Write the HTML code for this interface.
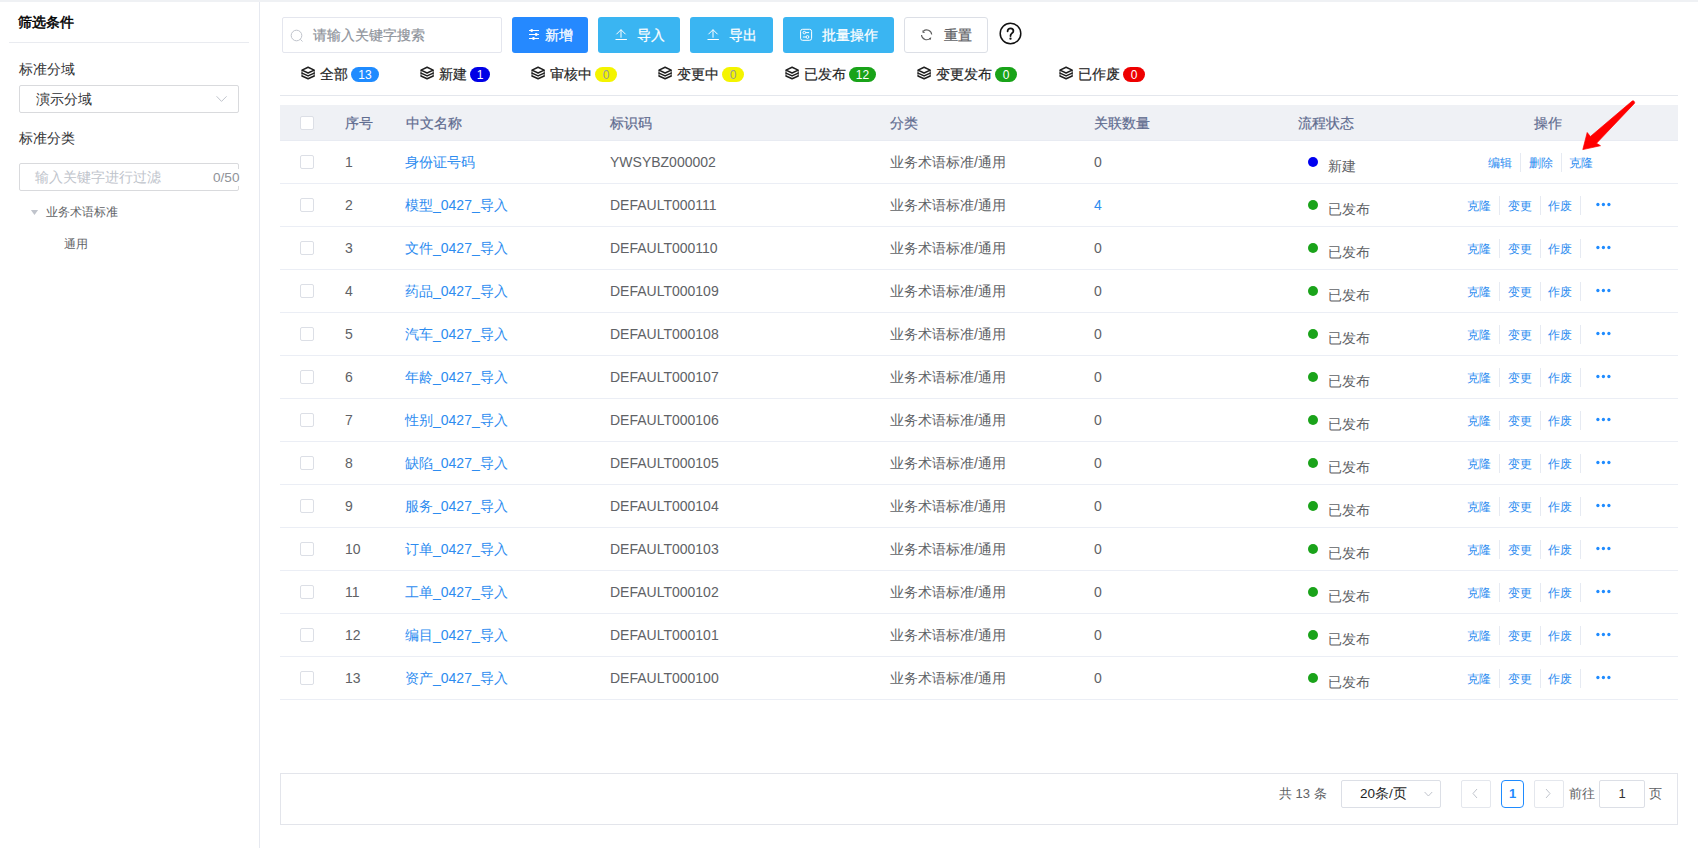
<!DOCTYPE html><html><head><meta charset="utf-8"><style>html,body{margin:0;padding:0}
body{width:1698px;height:848px;overflow:hidden;background:#fff;position:relative;font-family:"Liberation Sans",sans-serif}
.abs,.t,.hl,.vl,.box,.btn,.badge,.cb,.dot,.stk{position:absolute}
.t{white-space:nowrap}
.topstrip{position:absolute;left:0;top:0;width:1698px;height:2px;background:#eff1f4}
.sbborder{position:absolute;left:259px;top:2px;width:1px;height:846px;background:#e6e9f0}
.hl{height:1px}
.vl{width:1px;height:19px;background:#e6eaf2}
.box{border:1px solid #dcdfe6;border-radius:2px;background:#fff}
.btn{top:17px;height:36px;border-radius:3px}
.btn.pri{background:#2589ff}
.btn.lb{background:#3ab5f2}
.btn.plain{background:#fff;border:1px solid #dcdfe6;box-sizing:border-box}
.badge{top:67px;height:15px;border-radius:8px;font-size:12px;line-height:17px;text-align:center}
.cb{width:12px;height:12px;border:1px solid #dcdfe6;border-radius:2px;background:#fff}
.th{font-size:14px;font-weight:normal;-webkit-text-stroke:0.2px #5f6c90;color:#5f6c90;line-height:18px}
.td{font-size:14px;color:#606266;line-height:18px}
.lk{color:#2d8cf0}
.op{font-size:12px;color:#2d8cf0;line-height:16px}
.dot{width:10px;height:10px;border-radius:50%}
</style></head><body>
<div class="topstrip"></div><div class="sbborder"></div>
<div class="t" style="left:18px;top:13px;font-size:14px;-webkit-text-stroke:0.5px #000;color:#000;line-height:18px">筛选条件</div>
<div class="hl" style="left:9px;top:42px;width:240px;background:#e9ebf0"></div>
<div class="t" style="left:19px;top:60px;font-size:14px;color:#303133;line-height:18px">标准分域</div>
<div class="box" style="left:19px;top:85px;width:218px;height:26px;border-color:#d9dadd"></div>
<div class="t" style="left:36px;top:90px;font-size:14px;color:#303133;line-height:18px">演示分域</div>
<svg class="abs" style="left:215px;top:95px" width="12" height="8" viewBox="0 0 12 8"><path d="M1.6 1.3 L6.5 6.4 L11.6 1.3" fill="none" stroke="#c0c4cc" stroke-width="1"/></svg>
<div class="t" style="left:19px;top:129px;font-size:14px;color:#303133;line-height:18px">标准分类</div>
<div class="box" style="left:19px;top:163px;width:218px;height:26px;border-color:#d9dadd"></div>
<div class="t" style="left:35px;top:168px;font-size:14px;color:#c0c4cc;line-height:18px">输入关键字进行过滤</div>
<div class="t" style="left:213px;top:169px;font-size:13.6px;color:#909399;line-height:17px;background:#fff;padding-right:2px">0/50</div>
<svg class="abs" style="left:30px;top:209px" width="9" height="7" viewBox="0 0 9 7"><path d="M0.9 1 L8.1 1 L4.5 6 Z" fill="#c0c4cc"/></svg>
<div class="t" style="left:46px;top:204px;font-size:12px;color:#606266;line-height:16px">业务术语标准</div>
<div class="t" style="left:64px;top:236px;font-size:12px;color:#606266;line-height:16px">通用</div>
<div class="box" style="left:282px;top:17px;width:218px;height:34px;border-color:#e4e6ee"></div>
<svg class="abs" style="left:290px;top:28.5px" width="14" height="14" viewBox="0 0 14 14"><circle cx="6.5" cy="6.5" r="5.3" fill="none" stroke="#c0c4cc" stroke-width="1"/><path d="M10.3 10.3 L12.5 12.5" stroke="#c0c4cc" stroke-width="1"/></svg>
<div class="t" style="left:313px;top:26px;font-size:14px;color:#8e939b;-webkit-text-stroke:0.2px #8e939b;line-height:18px">请输入关键字搜索</div>
<div class="btn pri" style="left:512px;width:76px"></div><svg class="abs" style="left:528px;top:28px" width="12" height="12" viewBox="0 0 12 12"><g stroke="#fff" stroke-width="1"><path d="M1 2.5 H11 M1 6.5 H11 M1 10.5 H11"/></g><g fill="#fff"><circle cx="3.7" cy="2.5" r="1.4"/><circle cx="8.2" cy="6.5" r="1.4"/><circle cx="5.5" cy="10.5" r="1.4"/></g></svg><div class="t" style="left:545px;top:26px;font-size:14px;line-height:18px;color:#fff;-webkit-text-stroke:0.25px #fff">新增</div>
<div class="btn lb" style="left:598px;width:82px"></div><svg class="abs" style="left:615px;top:27px" width="12" height="14" viewBox="0 0 12 14"><g stroke="#fff" stroke-width="1" fill="none" stroke-linecap="round"><path d="M0.9 12.5 H11.5"/><path d="M6 3 V10.3"/><path d="M1.7 7 L6 2.7 L10.3 7"/></g></svg><div class="t" style="left:637px;top:26px;font-size:14px;line-height:18px;color:#fff;-webkit-text-stroke:0.25px #fff">导入</div>
<div class="btn lb" style="left:690px;width:83px"></div><svg class="abs" style="left:707px;top:27px" width="12" height="14" viewBox="0 0 12 14"><g stroke="#fff" stroke-width="1" fill="none" stroke-linecap="round"><path d="M0.9 12.5 H11.5"/><path d="M6 3 V10.3"/><path d="M1.7 7 L6 2.7 L10.3 7"/></g></svg><div class="t" style="left:729px;top:26px;font-size:14px;line-height:18px;color:#fff;-webkit-text-stroke:0.25px #fff">导出</div>
<div class="btn lb" style="left:783px;width:111px"></div><svg class="abs" style="left:799px;top:28px" width="14" height="14" viewBox="0 0 14 14"><g stroke="#fff" stroke-width="1" fill="none"><rect x="1.6" y="1.3" width="11" height="11" rx="2"/><path d="M6.6 4.6 H10.1 M3.9 9 H7.1"/><circle cx="5.3" cy="4.6" r="1.3"/><circle cx="8.5" cy="9" r="1.4"/></g></svg><div class="t" style="left:822px;top:26px;font-size:14px;line-height:18px;color:#fff;-webkit-text-stroke:0.25px #fff">批量操作</div>
<div class="btn plain" style="left:904px;width:84px"></div><svg class="abs" style="left:920px;top:28px" width="14" height="14" viewBox="0 0 14 14"><g stroke="#5c5c5c" stroke-width="1.1" fill="none"><path d="M3.3 3.2 A5.1 5.1 0 0 1 11.7 6.5"/><path d="M1.5 7 A5.1 5.1 0 0 0 10.4 10"/></g><g fill="#5c5c5c"><path d="M2.3 2.2 L2.7 5 L5.2 4.4 Z"/><path d="M11.2 9 L10.9 11.7 L8.5 11.2 Z"/></g></svg><div class="t" style="left:944px;top:26px;font-size:14px;line-height:18px;color:#606266;-webkit-text-stroke:0.25px #606266">重置</div>
<svg class="abs" style="left:998px;top:22px" width="24" height="24" viewBox="0 0 24 24"><circle cx="12.5" cy="11.5" r="10.3" fill="none" stroke="#111" stroke-width="1.5"/><path d="M9.6 9.3 C9.6 7.4 10.9 6.4 12.5 6.4 C14.1 6.4 15.4 7.5 15.4 9 C15.4 10.3 14.6 10.9 13.6 11.6 C12.8 12.2 12.5 12.7 12.5 14" fill="none" stroke="#111" stroke-width="1.8" stroke-linecap="round"/><circle cx="12.5" cy="16.7" r="1.15" fill="#111"/></svg>
<svg class="stk" style="left:301px;top:66px" width="15" height="14" viewBox="0 0 15 14"><g fill="none" stroke="#1e1e1e" stroke-width="1.5" stroke-linejoin="round" stroke-linecap="round"><path d="M7.1 1.2 L13.2 4.1 L7.1 7.0 L1.0 4.1 Z"/><path d="M1.0 7.1 L7.1 9.9 L13.2 7.1"/><path d="M1.0 10.0 L7.1 12.8 L13.2 10.0"/></g><g stroke="#1e1e1e" stroke-width="0.8"><path d="M1 4.1 V10 M13.2 4.1 V10"/></g></svg>
<div class="t" style="left:320px;top:65px;font-size:14px;color:#262626;-webkit-text-stroke:0.2px #262626;line-height:18px">全部</div>
<div class="badge" style="left:351px;width:28px;background:#1f8bff;color:#fff">13</div>
<svg class="stk" style="left:420px;top:66px" width="15" height="14" viewBox="0 0 15 14"><g fill="none" stroke="#1e1e1e" stroke-width="1.5" stroke-linejoin="round" stroke-linecap="round"><path d="M7.1 1.2 L13.2 4.1 L7.1 7.0 L1.0 4.1 Z"/><path d="M1.0 7.1 L7.1 9.9 L13.2 7.1"/><path d="M1.0 10.0 L7.1 12.8 L13.2 10.0"/></g><g stroke="#1e1e1e" stroke-width="0.8"><path d="M1 4.1 V10 M13.2 4.1 V10"/></g></svg>
<div class="t" style="left:439px;top:65px;font-size:14px;color:#262626;-webkit-text-stroke:0.2px #262626;line-height:18px">新建</div>
<div class="badge" style="left:470px;width:20px;background:#0000e6;color:#fff">1</div>
<svg class="stk" style="left:531px;top:66px" width="15" height="14" viewBox="0 0 15 14"><g fill="none" stroke="#1e1e1e" stroke-width="1.5" stroke-linejoin="round" stroke-linecap="round"><path d="M7.1 1.2 L13.2 4.1 L7.1 7.0 L1.0 4.1 Z"/><path d="M1.0 7.1 L7.1 9.9 L13.2 7.1"/><path d="M1.0 10.0 L7.1 12.8 L13.2 10.0"/></g><g stroke="#1e1e1e" stroke-width="0.8"><path d="M1 4.1 V10 M13.2 4.1 V10"/></g></svg>
<div class="t" style="left:550px;top:65px;font-size:14px;color:#262626;-webkit-text-stroke:0.2px #262626;line-height:18px">审核中</div>
<div class="badge" style="left:595px;width:22px;background:#f4f400;color:#9a9a9a">0</div>
<svg class="stk" style="left:658px;top:66px" width="15" height="14" viewBox="0 0 15 14"><g fill="none" stroke="#1e1e1e" stroke-width="1.5" stroke-linejoin="round" stroke-linecap="round"><path d="M7.1 1.2 L13.2 4.1 L7.1 7.0 L1.0 4.1 Z"/><path d="M1.0 7.1 L7.1 9.9 L13.2 7.1"/><path d="M1.0 10.0 L7.1 12.8 L13.2 10.0"/></g><g stroke="#1e1e1e" stroke-width="0.8"><path d="M1 4.1 V10 M13.2 4.1 V10"/></g></svg>
<div class="t" style="left:677px;top:65px;font-size:14px;color:#262626;-webkit-text-stroke:0.2px #262626;line-height:18px">变更中</div>
<div class="badge" style="left:722px;width:22px;background:#f4f400;color:#9a9a9a">0</div>
<svg class="stk" style="left:785px;top:66px" width="15" height="14" viewBox="0 0 15 14"><g fill="none" stroke="#1e1e1e" stroke-width="1.5" stroke-linejoin="round" stroke-linecap="round"><path d="M7.1 1.2 L13.2 4.1 L7.1 7.0 L1.0 4.1 Z"/><path d="M1.0 7.1 L7.1 9.9 L13.2 7.1"/><path d="M1.0 10.0 L7.1 12.8 L13.2 10.0"/></g><g stroke="#1e1e1e" stroke-width="0.8"><path d="M1 4.1 V10 M13.2 4.1 V10"/></g></svg>
<div class="t" style="left:804px;top:65px;font-size:14px;color:#262626;-webkit-text-stroke:0.2px #262626;line-height:18px">已发布</div>
<div class="badge" style="left:849px;width:27px;background:#19a319;color:#fff">12</div>
<svg class="stk" style="left:917px;top:66px" width="15" height="14" viewBox="0 0 15 14"><g fill="none" stroke="#1e1e1e" stroke-width="1.5" stroke-linejoin="round" stroke-linecap="round"><path d="M7.1 1.2 L13.2 4.1 L7.1 7.0 L1.0 4.1 Z"/><path d="M1.0 7.1 L7.1 9.9 L13.2 7.1"/><path d="M1.0 10.0 L7.1 12.8 L13.2 10.0"/></g><g stroke="#1e1e1e" stroke-width="0.8"><path d="M1 4.1 V10 M13.2 4.1 V10"/></g></svg>
<div class="t" style="left:936px;top:65px;font-size:14px;color:#262626;-webkit-text-stroke:0.2px #262626;line-height:18px">变更发布</div>
<div class="badge" style="left:995px;width:22px;background:#19a319;color:#fff">0</div>
<svg class="stk" style="left:1059px;top:66px" width="15" height="14" viewBox="0 0 15 14"><g fill="none" stroke="#1e1e1e" stroke-width="1.5" stroke-linejoin="round" stroke-linecap="round"><path d="M7.1 1.2 L13.2 4.1 L7.1 7.0 L1.0 4.1 Z"/><path d="M1.0 7.1 L7.1 9.9 L13.2 7.1"/><path d="M1.0 10.0 L7.1 12.8 L13.2 10.0"/></g><g stroke="#1e1e1e" stroke-width="0.8"><path d="M1 4.1 V10 M13.2 4.1 V10"/></g></svg>
<div class="t" style="left:1078px;top:65px;font-size:14px;color:#262626;-webkit-text-stroke:0.2px #262626;line-height:18px">已作废</div>
<div class="badge" style="left:1123px;width:22px;background:#ee0000;color:#fff">0</div>
<div class="hl" style="left:280px;top:95px;width:1398px;background:#e4e7ed"></div>
<div class="abs" style="left:280px;top:105px;width:1398px;height:35px;background:#eff1f5"></div>
<div class="hl" style="left:280px;top:140px;width:1398px;background:#e8ebf2"></div>
<div class="cb" style="left:300px;top:116px"></div>
<div class="t th" style="left:345px;top:114px">序号</div>
<div class="t th" style="left:406px;top:114px">中文名称</div>
<div class="t th" style="left:610px;top:114px">标识码</div>
<div class="t th" style="left:890px;top:114px">分类</div>
<div class="t th" style="left:1094px;top:114px">关联数量</div>
<div class="t th" style="left:1298px;top:114px">流程状态</div>
<div class="t th" style="left:1534px;top:114px">操作</div>
<div class="hl" style="left:280px;top:183px;width:1398px;background:#ebeef5"></div>
<div class="cb" style="left:300px;top:155px"></div>
<div class="t td" style="left:345px;top:153px">1</div>
<div class="t td lk" style="left:405px;top:153px">身份证号码</div>
<div class="t td" style="left:610px;top:153px">YWSYBZ000002</div>
<div class="t td" style="left:890px;top:153px">业务术语标准/通用</div>
<div class="t td" style="left:1094px;top:153px">0</div>
<div class="dot" style="left:1308px;top:157px;background:#0000f0"></div>
<div class="t td" style="left:1328px;top:157px">新建</div>
<div class="t op" style="left:1488px;top:155px">编辑</div>
<div class="t op" style="left:1529px;top:155px">删除</div>
<div class="t op" style="left:1569px;top:155px">克隆</div>
<div class="vl" style="left:1520px;top:153px"></div>
<div class="vl" style="left:1561px;top:153px"></div>
<div class="hl" style="left:280px;top:226px;width:1398px;background:#ebeef5"></div>
<div class="cb" style="left:300px;top:198px"></div>
<div class="t td" style="left:345px;top:196px">2</div>
<div class="t td lk" style="left:405px;top:196px">模型_0427_导入</div>
<div class="t td" style="left:610px;top:196px">DEFAULT000111</div>
<div class="t td" style="left:890px;top:196px">业务术语标准/通用</div>
<div class="t td lk" style="left:1094px;top:196px">4</div>
<div class="dot" style="left:1308px;top:200px;background:#1aa31a"></div>
<div class="t td" style="left:1328px;top:200px">已发布</div>
<div class="t op" style="left:1467px;top:198px">克隆</div>
<div class="t op" style="left:1508px;top:198px">变更</div>
<div class="t op" style="left:1548px;top:198px">作废</div>
<div class="vl" style="left:1499px;top:196px"></div>
<div class="vl" style="left:1540px;top:196px"></div>
<div class="vl" style="left:1580px;top:196px"></div>
<svg class="abs" style="left:1595px;top:202px" width="16" height="5" viewBox="0 0 16 5"><circle cx="2.9" cy="2.5" r="1.65" fill="#1f8bff"/><circle cx="8.4" cy="2.5" r="1.65" fill="#1f8bff"/><circle cx="13.9" cy="2.5" r="1.65" fill="#1f8bff"/></svg>
<div class="hl" style="left:280px;top:269px;width:1398px;background:#ebeef5"></div>
<div class="cb" style="left:300px;top:241px"></div>
<div class="t td" style="left:345px;top:239px">3</div>
<div class="t td lk" style="left:405px;top:239px">文件_0427_导入</div>
<div class="t td" style="left:610px;top:239px">DEFAULT000110</div>
<div class="t td" style="left:890px;top:239px">业务术语标准/通用</div>
<div class="t td" style="left:1094px;top:239px">0</div>
<div class="dot" style="left:1308px;top:243px;background:#1aa31a"></div>
<div class="t td" style="left:1328px;top:243px">已发布</div>
<div class="t op" style="left:1467px;top:241px">克隆</div>
<div class="t op" style="left:1508px;top:241px">变更</div>
<div class="t op" style="left:1548px;top:241px">作废</div>
<div class="vl" style="left:1499px;top:239px"></div>
<div class="vl" style="left:1540px;top:239px"></div>
<div class="vl" style="left:1580px;top:239px"></div>
<svg class="abs" style="left:1595px;top:245px" width="16" height="5" viewBox="0 0 16 5"><circle cx="2.9" cy="2.5" r="1.65" fill="#1f8bff"/><circle cx="8.4" cy="2.5" r="1.65" fill="#1f8bff"/><circle cx="13.9" cy="2.5" r="1.65" fill="#1f8bff"/></svg>
<div class="hl" style="left:280px;top:312px;width:1398px;background:#ebeef5"></div>
<div class="cb" style="left:300px;top:284px"></div>
<div class="t td" style="left:345px;top:282px">4</div>
<div class="t td lk" style="left:405px;top:282px">药品_0427_导入</div>
<div class="t td" style="left:610px;top:282px">DEFAULT000109</div>
<div class="t td" style="left:890px;top:282px">业务术语标准/通用</div>
<div class="t td" style="left:1094px;top:282px">0</div>
<div class="dot" style="left:1308px;top:286px;background:#1aa31a"></div>
<div class="t td" style="left:1328px;top:286px">已发布</div>
<div class="t op" style="left:1467px;top:284px">克隆</div>
<div class="t op" style="left:1508px;top:284px">变更</div>
<div class="t op" style="left:1548px;top:284px">作废</div>
<div class="vl" style="left:1499px;top:282px"></div>
<div class="vl" style="left:1540px;top:282px"></div>
<div class="vl" style="left:1580px;top:282px"></div>
<svg class="abs" style="left:1595px;top:288px" width="16" height="5" viewBox="0 0 16 5"><circle cx="2.9" cy="2.5" r="1.65" fill="#1f8bff"/><circle cx="8.4" cy="2.5" r="1.65" fill="#1f8bff"/><circle cx="13.9" cy="2.5" r="1.65" fill="#1f8bff"/></svg>
<div class="hl" style="left:280px;top:355px;width:1398px;background:#ebeef5"></div>
<div class="cb" style="left:300px;top:327px"></div>
<div class="t td" style="left:345px;top:325px">5</div>
<div class="t td lk" style="left:405px;top:325px">汽车_0427_导入</div>
<div class="t td" style="left:610px;top:325px">DEFAULT000108</div>
<div class="t td" style="left:890px;top:325px">业务术语标准/通用</div>
<div class="t td" style="left:1094px;top:325px">0</div>
<div class="dot" style="left:1308px;top:329px;background:#1aa31a"></div>
<div class="t td" style="left:1328px;top:329px">已发布</div>
<div class="t op" style="left:1467px;top:327px">克隆</div>
<div class="t op" style="left:1508px;top:327px">变更</div>
<div class="t op" style="left:1548px;top:327px">作废</div>
<div class="vl" style="left:1499px;top:325px"></div>
<div class="vl" style="left:1540px;top:325px"></div>
<div class="vl" style="left:1580px;top:325px"></div>
<svg class="abs" style="left:1595px;top:331px" width="16" height="5" viewBox="0 0 16 5"><circle cx="2.9" cy="2.5" r="1.65" fill="#1f8bff"/><circle cx="8.4" cy="2.5" r="1.65" fill="#1f8bff"/><circle cx="13.9" cy="2.5" r="1.65" fill="#1f8bff"/></svg>
<div class="hl" style="left:280px;top:398px;width:1398px;background:#ebeef5"></div>
<div class="cb" style="left:300px;top:370px"></div>
<div class="t td" style="left:345px;top:368px">6</div>
<div class="t td lk" style="left:405px;top:368px">年龄_0427_导入</div>
<div class="t td" style="left:610px;top:368px">DEFAULT000107</div>
<div class="t td" style="left:890px;top:368px">业务术语标准/通用</div>
<div class="t td" style="left:1094px;top:368px">0</div>
<div class="dot" style="left:1308px;top:372px;background:#1aa31a"></div>
<div class="t td" style="left:1328px;top:372px">已发布</div>
<div class="t op" style="left:1467px;top:370px">克隆</div>
<div class="t op" style="left:1508px;top:370px">变更</div>
<div class="t op" style="left:1548px;top:370px">作废</div>
<div class="vl" style="left:1499px;top:368px"></div>
<div class="vl" style="left:1540px;top:368px"></div>
<div class="vl" style="left:1580px;top:368px"></div>
<svg class="abs" style="left:1595px;top:374px" width="16" height="5" viewBox="0 0 16 5"><circle cx="2.9" cy="2.5" r="1.65" fill="#1f8bff"/><circle cx="8.4" cy="2.5" r="1.65" fill="#1f8bff"/><circle cx="13.9" cy="2.5" r="1.65" fill="#1f8bff"/></svg>
<div class="hl" style="left:280px;top:441px;width:1398px;background:#ebeef5"></div>
<div class="cb" style="left:300px;top:413px"></div>
<div class="t td" style="left:345px;top:411px">7</div>
<div class="t td lk" style="left:405px;top:411px">性别_0427_导入</div>
<div class="t td" style="left:610px;top:411px">DEFAULT000106</div>
<div class="t td" style="left:890px;top:411px">业务术语标准/通用</div>
<div class="t td" style="left:1094px;top:411px">0</div>
<div class="dot" style="left:1308px;top:415px;background:#1aa31a"></div>
<div class="t td" style="left:1328px;top:415px">已发布</div>
<div class="t op" style="left:1467px;top:413px">克隆</div>
<div class="t op" style="left:1508px;top:413px">变更</div>
<div class="t op" style="left:1548px;top:413px">作废</div>
<div class="vl" style="left:1499px;top:411px"></div>
<div class="vl" style="left:1540px;top:411px"></div>
<div class="vl" style="left:1580px;top:411px"></div>
<svg class="abs" style="left:1595px;top:417px" width="16" height="5" viewBox="0 0 16 5"><circle cx="2.9" cy="2.5" r="1.65" fill="#1f8bff"/><circle cx="8.4" cy="2.5" r="1.65" fill="#1f8bff"/><circle cx="13.9" cy="2.5" r="1.65" fill="#1f8bff"/></svg>
<div class="hl" style="left:280px;top:484px;width:1398px;background:#ebeef5"></div>
<div class="cb" style="left:300px;top:456px"></div>
<div class="t td" style="left:345px;top:454px">8</div>
<div class="t td lk" style="left:405px;top:454px">缺陷_0427_导入</div>
<div class="t td" style="left:610px;top:454px">DEFAULT000105</div>
<div class="t td" style="left:890px;top:454px">业务术语标准/通用</div>
<div class="t td" style="left:1094px;top:454px">0</div>
<div class="dot" style="left:1308px;top:458px;background:#1aa31a"></div>
<div class="t td" style="left:1328px;top:458px">已发布</div>
<div class="t op" style="left:1467px;top:456px">克隆</div>
<div class="t op" style="left:1508px;top:456px">变更</div>
<div class="t op" style="left:1548px;top:456px">作废</div>
<div class="vl" style="left:1499px;top:454px"></div>
<div class="vl" style="left:1540px;top:454px"></div>
<div class="vl" style="left:1580px;top:454px"></div>
<svg class="abs" style="left:1595px;top:460px" width="16" height="5" viewBox="0 0 16 5"><circle cx="2.9" cy="2.5" r="1.65" fill="#1f8bff"/><circle cx="8.4" cy="2.5" r="1.65" fill="#1f8bff"/><circle cx="13.9" cy="2.5" r="1.65" fill="#1f8bff"/></svg>
<div class="hl" style="left:280px;top:527px;width:1398px;background:#ebeef5"></div>
<div class="cb" style="left:300px;top:499px"></div>
<div class="t td" style="left:345px;top:497px">9</div>
<div class="t td lk" style="left:405px;top:497px">服务_0427_导入</div>
<div class="t td" style="left:610px;top:497px">DEFAULT000104</div>
<div class="t td" style="left:890px;top:497px">业务术语标准/通用</div>
<div class="t td" style="left:1094px;top:497px">0</div>
<div class="dot" style="left:1308px;top:501px;background:#1aa31a"></div>
<div class="t td" style="left:1328px;top:501px">已发布</div>
<div class="t op" style="left:1467px;top:499px">克隆</div>
<div class="t op" style="left:1508px;top:499px">变更</div>
<div class="t op" style="left:1548px;top:499px">作废</div>
<div class="vl" style="left:1499px;top:497px"></div>
<div class="vl" style="left:1540px;top:497px"></div>
<div class="vl" style="left:1580px;top:497px"></div>
<svg class="abs" style="left:1595px;top:503px" width="16" height="5" viewBox="0 0 16 5"><circle cx="2.9" cy="2.5" r="1.65" fill="#1f8bff"/><circle cx="8.4" cy="2.5" r="1.65" fill="#1f8bff"/><circle cx="13.9" cy="2.5" r="1.65" fill="#1f8bff"/></svg>
<div class="hl" style="left:280px;top:570px;width:1398px;background:#ebeef5"></div>
<div class="cb" style="left:300px;top:542px"></div>
<div class="t td" style="left:345px;top:540px">10</div>
<div class="t td lk" style="left:405px;top:540px">订单_0427_导入</div>
<div class="t td" style="left:610px;top:540px">DEFAULT000103</div>
<div class="t td" style="left:890px;top:540px">业务术语标准/通用</div>
<div class="t td" style="left:1094px;top:540px">0</div>
<div class="dot" style="left:1308px;top:544px;background:#1aa31a"></div>
<div class="t td" style="left:1328px;top:544px">已发布</div>
<div class="t op" style="left:1467px;top:542px">克隆</div>
<div class="t op" style="left:1508px;top:542px">变更</div>
<div class="t op" style="left:1548px;top:542px">作废</div>
<div class="vl" style="left:1499px;top:540px"></div>
<div class="vl" style="left:1540px;top:540px"></div>
<div class="vl" style="left:1580px;top:540px"></div>
<svg class="abs" style="left:1595px;top:546px" width="16" height="5" viewBox="0 0 16 5"><circle cx="2.9" cy="2.5" r="1.65" fill="#1f8bff"/><circle cx="8.4" cy="2.5" r="1.65" fill="#1f8bff"/><circle cx="13.9" cy="2.5" r="1.65" fill="#1f8bff"/></svg>
<div class="hl" style="left:280px;top:613px;width:1398px;background:#ebeef5"></div>
<div class="cb" style="left:300px;top:585px"></div>
<div class="t td" style="left:345px;top:583px">11</div>
<div class="t td lk" style="left:405px;top:583px">工单_0427_导入</div>
<div class="t td" style="left:610px;top:583px">DEFAULT000102</div>
<div class="t td" style="left:890px;top:583px">业务术语标准/通用</div>
<div class="t td" style="left:1094px;top:583px">0</div>
<div class="dot" style="left:1308px;top:587px;background:#1aa31a"></div>
<div class="t td" style="left:1328px;top:587px">已发布</div>
<div class="t op" style="left:1467px;top:585px">克隆</div>
<div class="t op" style="left:1508px;top:585px">变更</div>
<div class="t op" style="left:1548px;top:585px">作废</div>
<div class="vl" style="left:1499px;top:583px"></div>
<div class="vl" style="left:1540px;top:583px"></div>
<div class="vl" style="left:1580px;top:583px"></div>
<svg class="abs" style="left:1595px;top:589px" width="16" height="5" viewBox="0 0 16 5"><circle cx="2.9" cy="2.5" r="1.65" fill="#1f8bff"/><circle cx="8.4" cy="2.5" r="1.65" fill="#1f8bff"/><circle cx="13.9" cy="2.5" r="1.65" fill="#1f8bff"/></svg>
<div class="hl" style="left:280px;top:656px;width:1398px;background:#ebeef5"></div>
<div class="cb" style="left:300px;top:628px"></div>
<div class="t td" style="left:345px;top:626px">12</div>
<div class="t td lk" style="left:405px;top:626px">编目_0427_导入</div>
<div class="t td" style="left:610px;top:626px">DEFAULT000101</div>
<div class="t td" style="left:890px;top:626px">业务术语标准/通用</div>
<div class="t td" style="left:1094px;top:626px">0</div>
<div class="dot" style="left:1308px;top:630px;background:#1aa31a"></div>
<div class="t td" style="left:1328px;top:630px">已发布</div>
<div class="t op" style="left:1467px;top:628px">克隆</div>
<div class="t op" style="left:1508px;top:628px">变更</div>
<div class="t op" style="left:1548px;top:628px">作废</div>
<div class="vl" style="left:1499px;top:626px"></div>
<div class="vl" style="left:1540px;top:626px"></div>
<div class="vl" style="left:1580px;top:626px"></div>
<svg class="abs" style="left:1595px;top:632px" width="16" height="5" viewBox="0 0 16 5"><circle cx="2.9" cy="2.5" r="1.65" fill="#1f8bff"/><circle cx="8.4" cy="2.5" r="1.65" fill="#1f8bff"/><circle cx="13.9" cy="2.5" r="1.65" fill="#1f8bff"/></svg>
<div class="hl" style="left:280px;top:699px;width:1398px;background:#ebeef5"></div>
<div class="cb" style="left:300px;top:671px"></div>
<div class="t td" style="left:345px;top:669px">13</div>
<div class="t td lk" style="left:405px;top:669px">资产_0427_导入</div>
<div class="t td" style="left:610px;top:669px">DEFAULT000100</div>
<div class="t td" style="left:890px;top:669px">业务术语标准/通用</div>
<div class="t td" style="left:1094px;top:669px">0</div>
<div class="dot" style="left:1308px;top:673px;background:#1aa31a"></div>
<div class="t td" style="left:1328px;top:673px">已发布</div>
<div class="t op" style="left:1467px;top:671px">克隆</div>
<div class="t op" style="left:1508px;top:671px">变更</div>
<div class="t op" style="left:1548px;top:671px">作废</div>
<div class="vl" style="left:1499px;top:669px"></div>
<div class="vl" style="left:1540px;top:669px"></div>
<div class="vl" style="left:1580px;top:669px"></div>
<svg class="abs" style="left:1595px;top:675px" width="16" height="5" viewBox="0 0 16 5"><circle cx="2.9" cy="2.5" r="1.65" fill="#1f8bff"/><circle cx="8.4" cy="2.5" r="1.65" fill="#1f8bff"/><circle cx="13.9" cy="2.5" r="1.65" fill="#1f8bff"/></svg>
<svg class="abs" style="left:1570px;top:95px" width="75" height="65" viewBox="0 0 75 65"><path d="M62.2 6.0 L20.4 41.5 L17.2 37.5 L12.8 54.6 L30.5 50.7 L26.5 48.3 L64.4 8.4 A1.7 1.7 0 0 0 62.2 6.0 Z" fill="#f00" stroke="#f00" stroke-width="0.7" stroke-linejoin="round"/></svg>
<div class="abs" style="left:280px;top:773px;width:1396px;height:50px;border:1px solid #e3e5eb"></div>
<div class="t" style="left:1279px;top:785px;font-size:13px;color:#606266;line-height:18px">共 13 条</div>
<div class="box" style="left:1341px;top:780px;width:98px;height:26px"></div>
<div class="t" style="left:1360px;top:785px;font-size:13.5px;color:#1f1f1f;line-height:18px">20条/页</div>
<svg class="abs" style="left:1424px;top:791px" width="10" height="7" viewBox="0 0 10 7"><path d="M0.6 1 L4.4 5 L8.2 1" fill="none" stroke="#c0c4cc" stroke-width="1"/></svg>
<div class="box" style="left:1461px;top:780px;width:28px;height:26px;border-color:#e4e7ed"></div>
<svg class="abs" style="left:1471px;top:788px" width="8" height="11" viewBox="0 0 8 11"><path d="M6 1 L2 5.5 L6 10" fill="none" stroke="#c0c4cc" stroke-width="1"/></svg>
<div class="box" style="left:1501px;top:780px;width:21px;height:26px;border-color:#1f8bff;border-radius:4px"></div>
<div class="t" style="left:1501px;top:785px;width:23px;text-align:center;font-size:13px;font-weight:bold;color:#1f8bff;line-height:18px">1</div>
<div class="box" style="left:1534px;top:780px;width:28px;height:26px;border-color:#e4e7ed"></div>
<svg class="abs" style="left:1544px;top:788px" width="8" height="11" viewBox="0 0 8 11"><path d="M2 1 L6 5.5 L2 10" fill="none" stroke="#c0c4cc" stroke-width="1"/></svg>
<div class="t" style="left:1569px;top:785px;font-size:13px;color:#606266;line-height:18px">前往</div>
<div class="box" style="left:1599px;top:780px;width:44px;height:26px"></div>
<div class="t" style="left:1599px;top:785px;width:46px;text-align:center;font-size:13px;color:#303133;line-height:18px">1</div>
<div class="t" style="left:1649px;top:785px;font-size:13px;color:#606266;line-height:18px">页</div>
<script>
(function(){try{
var c=document.createElement('canvas').getContext('2d');
c.font='100px "Liberation Sans", sans-serif';
if(c.measureText('中文名称').width>340)return;
var re=/[⺀-鿿豈-﫿＀-￯　-〿]+/g;
var els=document.querySelectorAll('.t');
for(var i=0;i<els.length;i++){
 var el=els[i];var nodes=[].slice.call(el.childNodes);
 for(var j=0;j<nodes.length;j++){var n=nodes[j];if(n.nodeType!==3)continue;
  var t=n.nodeValue;if(!re.test(t))continue;re.lastIndex=0;
  var frag=document.createDocumentFragment();var last=0;var m;
  while((m=re.exec(t))){
   if(m.index>last)frag.appendChild(document.createTextNode(t.slice(last,m.index)));
   var sp=document.createElement('span');sp.style.letterSpacing='0.25em';sp.textContent=m[0];frag.appendChild(sp);
   last=m.index+m[0].length;}
  if(last<t.length)frag.appendChild(document.createTextNode(t.slice(last)));
  el.replaceChild(frag,n);}
}}catch(e){}})();
</script>
</body></html>
